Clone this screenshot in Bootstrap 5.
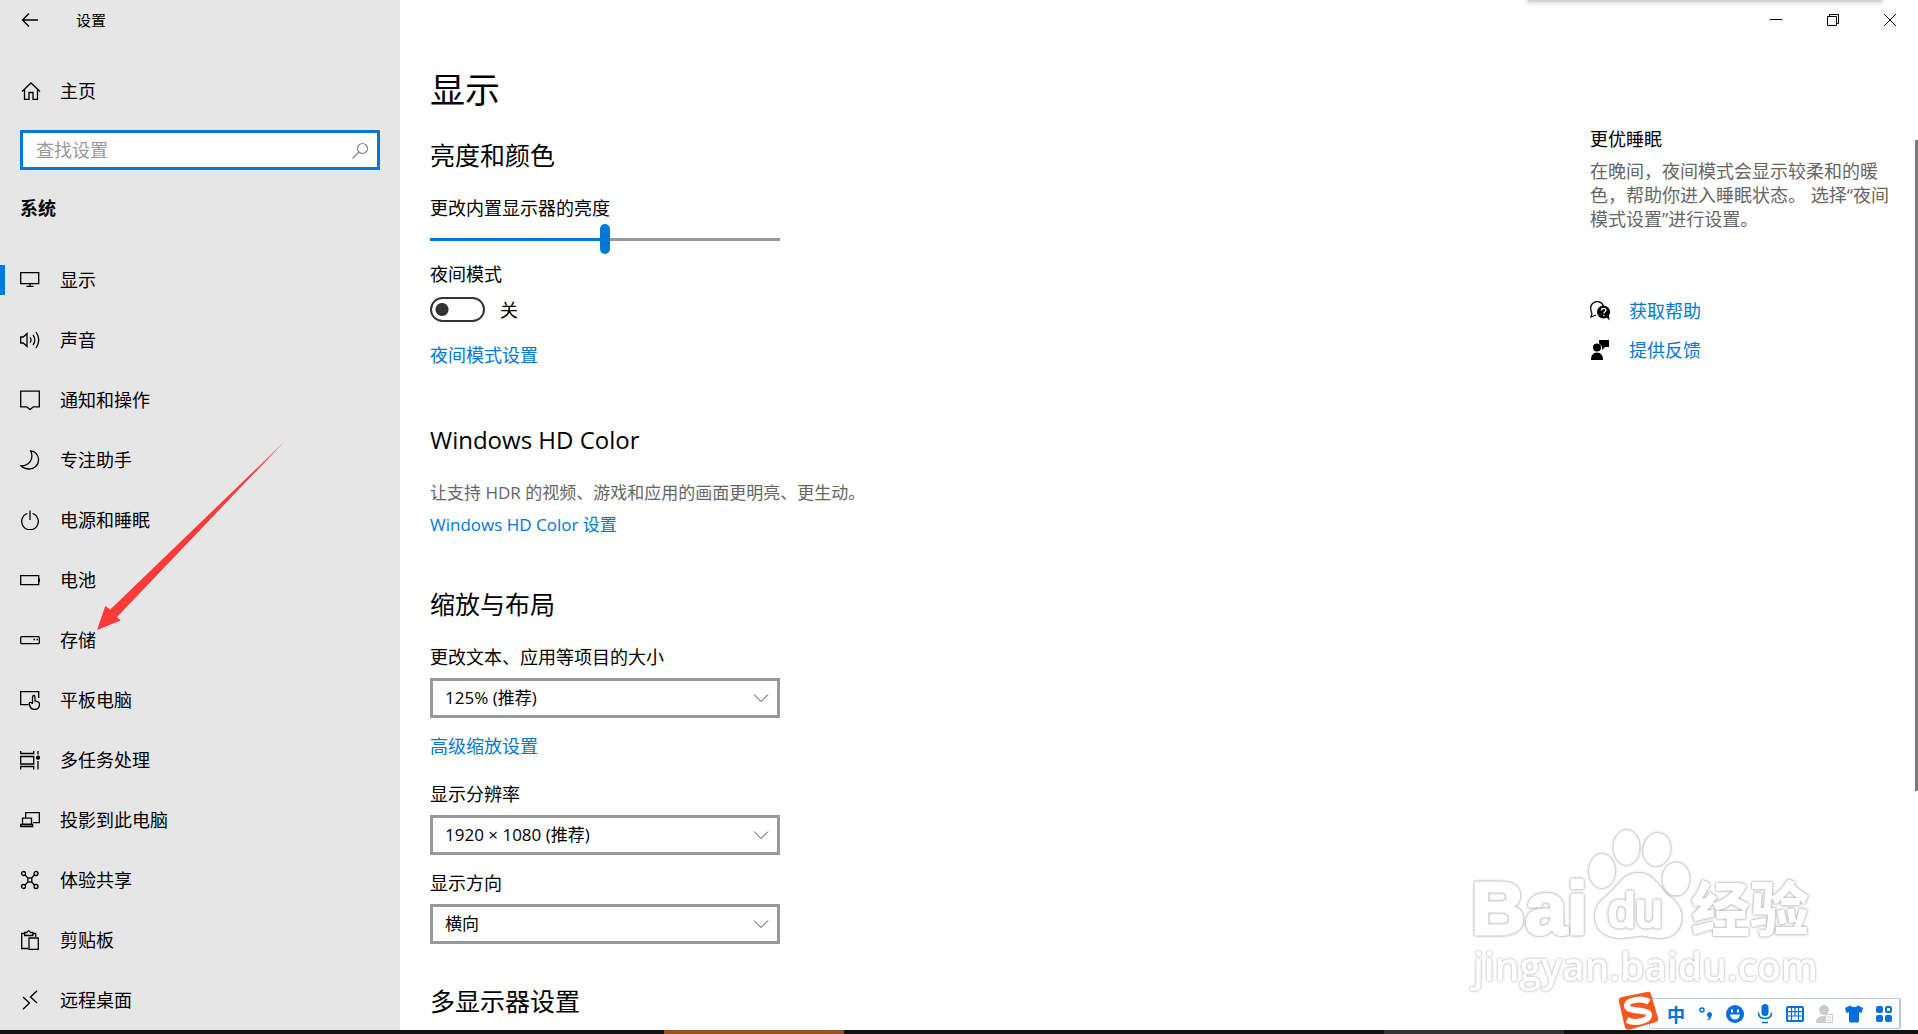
<!DOCTYPE html>
<html lang="zh-CN">
<head>
<meta charset="utf-8">
<meta name="viewport" content="width=device-width, initial-scale=1">
<title>设置</title>
<link href="https://cdn.jsdelivr.net/npm/bootstrap@5.3.0/dist/css/bootstrap.min.css" rel="stylesheet">
<style>
:root{--accent:#0078d7;--edge:#999}
body{font-family:"Open Sans","Noto Sans CJK SC",sans-serif;font-size:18px;line-height:24px;color:#000;background:#fff}
a{color:var(--accent);text-decoration:none}
svg{flex:none;display:block}
.line-art{fill:none;stroke:#000;stroke-width:1.3}
.side-pane{width:400px;background:#e6e6e6}
.title-line{height:40px;font-size:15px}
.back-btn{width:60px;height:40px}
.home-link{height:60px;margin-top:21px;gap:14px;color:#000}
.find-box{margin:9px 20px 0}
.find-box input{height:40px;border:3px solid var(--accent);border-radius:0;padding:0 40px 0 13px;font-size:18px;color:#000}
.find-box input::placeholder{color:#999;opacity:1}
.find-box svg{position:absolute;right:11px;top:12px}
.pane-title{font-size:18px;font-weight:700;line-height:24px;margin:26px 20px 30px}
.side-nav .nav-link{height:60px;padding:0 20px;gap:20px;color:#000;position:relative}
.side-nav .nav-link.active::before{content:"";position:absolute;left:0;top:15px;width:5px;height:30px;background:var(--accent)}
.win-btn{width:57px;height:40px}
.page-main{padding:26px 0 0 30px}
h1{font-size:35px;line-height:48px;margin:0;font-weight:400}
h2{font-size:25px;line-height:34px;margin:0;font-weight:400}
.h2-latin{font-size:24px}
.latin{font-size:17px}
.grp{margin-top:24px}
.grp-a{margin-top:56px}
.grp-b{margin-top:50px}
.grp-c{margin-top:40px}
.under-h{margin-top:24px}
.field{width:350px;max-width:100%}
.bright{appearance:none;-webkit-appearance:none;display:block;width:100%;height:30px;margin:4px 0 0;background:linear-gradient(var(--accent),var(--accent)) 0 14px/50% 3px no-repeat,linear-gradient(var(--edge),var(--edge)) 0 14px/100% 3px no-repeat}
.bright::-webkit-slider-thumb{-webkit-appearance:none;width:10px;height:30px;border-radius:5px;background:var(--accent)}
.bright::-moz-range-thumb{width:10px;height:30px;border:0;border-radius:5px;background:var(--accent)}
.night-row{gap:15px;padding:11px 0 21px}
.night-row .form-check-input{width:55px;height:25px;margin:0;float:none;border:2px solid #333;border-radius:13px;background:radial-gradient(circle at 10px 50%,#333 6px,transparent 7px) no-repeat}
.pick{height:40px;margin-top:9px;border:3px solid var(--edge);border-radius:0;padding:0 40px 0 12px;font-size:17px;line-height:24px;color:#000;background-image:url("data:image/svg+xml,%3Csvg xmlns='http://www.w3.org/2000/svg' viewBox='0 0 16 16'%3E%3Cpath d='M1 4.5l7 7 7-7' fill='none' stroke='%23444' stroke-width='1'/%3E%3C/svg%3E");background-size:16px 16px;background-position:right 8px center}
.tips{width:328px;padding:61px 24px 0 0}
.tips p{margin:8px 0 0}
.help-list{padding-top:60px}
.muted{color:#666}
.help-link{gap:18px;height:39px}
.thumb{position:absolute;right:0;top:140px;width:3px;height:63%;background:#7a7a7a}
.peek{position:absolute;right:36px;top:-6px;width:354px;height:8px;background:#d4d4d4;box-shadow:0 0 4px 1px #d4d4d4}
.pointer-arrow{position:absolute;left:96px;top:441px}
.brand-mark{position:absolute;right:88px;bottom:32px}
.brand-mark .puff{fill:#fff;filter:drop-shadow(0 0 1px #aaa) drop-shadow(0 0 1px #ccc)}
.brand-mark .puff-thick{stroke:#fff;stroke-width:3;stroke-linejoin:round}
.brand-mark .puff-soft{fill:#fff;filter:drop-shadow(0 0 1px #bbb) drop-shadow(0 0 1px #ddd)}
.ime{position:absolute;right:17px;bottom:5px;width:252px;height:31px;padding-left:11px;background:#fff;border:1px solid #b9c9e4;border-right-width:2px;border-radius:2px}
.ime .btn{width:30px;height:29px;color:#0070dc;font:700 18px/24px "Noto Sans CJK SC",sans-serif}
.ime-logo{position:absolute;left:-32px;top:-8px}
.task-strip{height:4px;background:#111}
.task-strip i{width:180px}
</style>
</head>
<body>
<div class="vh-100 d-flex flex-column overflow-hidden position-relative">
<div class="d-flex flex-grow-1 overflow-hidden" style="min-height:0">
  <aside class="side-pane flex-shrink-0 overflow-hidden">
    <header class="title-line d-flex align-items-center">
      <button class="btn back-btn p-0 d-flex align-items-center justify-content-center flex-shrink-0 border-0" aria-label="返回"><svg width="18" height="16" viewBox="0 0 18 16" class="line-art"><path d="M17 8H1.500M8 1.500L1.500 8 8 14.500"/></svg></button>
      <span class="ps-3">设置</span>
    </header>
    <a href="#" class="home-link d-flex align-items-center px-3"><svg width="30" height="20" viewBox="-5 0 30 20" class="line-art"><path d="M1 10.500L10 2l9 8.500M3.500 8.500V18.400H8V11.500h4v6.900h4.500V8.500"/></svg><span>主页</span></a>
    <div class="find-box position-relative">
      <input type="search" class="form-control shadow-none" placeholder="查找设置" aria-label="查找设置">
      <svg width="18" height="18" viewBox="0 0 18 18" fill="none" stroke="#888" stroke-width="1.200"><circle cx="11.500" cy="6.500" r="5"/><path d="M8 10L1.500 16.500"/></svg>
    </div>
    <h2 class="pane-title">系统</h2>
    <nav class="nav flex-column side-nav flex-nowrap">
      <a href="#" class="nav-link active d-flex align-items-center" aria-current="page"><svg width="20" height="20" viewBox="0 0 20 20" class="line-art"><path d="M.7 2.700h18v11H.7zM10 13.700v2.500M6.500 16.300h7"/></svg>显示</a>
      <a href="#" class="nav-link d-flex align-items-center"><svg width="20" height="20" viewBox="0 0 20 20" class="line-art"><path d="M.7 7v6h2.600L7 16.500v-13L3.300 7zM10 7.300q2 2.700 0 5.400M13 5q3.600 5 0 10M16 2q5.500 8 0 16"/></svg>声音</a>
      <a href="#" class="nav-link d-flex align-items-center"><svg width="20" height="20" viewBox="0 0 20 20" class="line-art"><path d="M.7 1.200h18.600v15.600h-6L10 19.600l-3.300-2.800h-6z"/></svg>通知和操作</a>
      <a href="#" class="nav-link d-flex align-items-center"><svg width="20" height="20" viewBox="0 0 20 20" class="line-art"><path d="M10.700.8C15 1 18.600 5 18.600 9.800c0 5-4 9.200-9.200 9.200-3.700 0-6.700-1.300-8.400-3.200C8.500 16 14.500 9.500 10.700.8z"/></svg>专注助手</a>
      <a href="#" class="nav-link d-flex align-items-center"><svg width="20" height="20" viewBox="0 0 20 20" class="line-art"><path d="M7.500 3.500a8.300 8.300 0 1 0 5 0M10 .5v9.500"/></svg>电源和睡眠</a>
      <a href="#" class="nav-link d-flex align-items-center"><svg width="20" height="20" viewBox="0 0 20 20" class="line-art"><path d="M.7 5.700h18v9H.7zM19.500 8.500v3.500"/></svg>电池</a>
      <a href="#" class="nav-link d-flex align-items-center"><svg width="20" height="20" viewBox="0 0 20 20" class="line-art"><rect x=".7" y="6.700" width="18.600" height="7" rx="1"/><path d="M13.500 9.500h1.500M16.500 9.500H18"/></svg>存储</a>
      <a href="#" class="nav-link d-flex align-items-center"><svg width="20" height="20" viewBox="0 0 20 20" class="line-art"><path d="M8.500 14.700H.7v-13h18V8M12.500 14V7c0-2 2.500-2 2.500 0v4l3 .8q1.500.6 1.500 2.200c0 3-1.500 5.500-5 5.500-3 0-4.500-2-5.200-5.500-.3-2 1.500-2.500 3.200 0"/></svg>平板电脑</a>
      <a href="#" class="nav-link d-flex align-items-center"><svg width="20" height="20" viewBox="0 0 20 20" class="line-art"><path d="M.7 1v2.500h13V1M.7 6.500h13v7.500h-13zM.7 19.500v-3h13v3M18 1v3.500M18 11v8.500"/><circle cx="18" cy="7.700" r="1.500" fill="#000"/></svg>多任务处理</a>
      <a href="#" class="nav-link d-flex align-items-center"><svg width="20" height="20" viewBox="0 0 20 20" class="line-art"><path d="M5.700 8V2.700h13.600v10H13M2.500 8.200h9v6h-9zM.7 16.500V14.500h12v2z"/></svg>投影到此电脑</a>
      <a href="#" class="nav-link d-flex align-items-center"><svg width="20" height="20" viewBox="0 0 20 20" class="line-art"><circle cx="3.500" cy="3.500" r="2"/><circle cx="16" cy="3.500" r="2"/><circle cx="3.500" cy="16.500" r="2"/><circle cx="16" cy="16.500" r="2"/><rect x="7.800" y="8" width="4" height="4"/><path d="M5 5l3 3M14.500 5l-3 3M5 15l3-3M14.500 15l-3-3"/></svg>体验共享</a>
      <a href="#" class="nav-link d-flex align-items-center"><svg width="20" height="20" viewBox="0 0 20 20" class="line-art"><path d="M8 18.500H1.700v-15H4M13 3.500h2.700V7M4.700 5.500v-3h2.200q1.800-3.300 3.600 0h2.300v3zM9 8h9.300v11.300H9z"/></svg>剪贴板</a>
      <a href="#" class="nav-link d-flex align-items-center"><svg width="20" height="20" viewBox="0 0 20 20" class="line-art"><path d="M3 7l6.500 6L3 19.300M17 .7L10.500 7 17 13"/></svg>远程桌面</a>
    </nav>
  </aside>
  <div class="flex-grow-1 d-flex flex-column overflow-hidden">
    <div class="d-flex justify-content-end flex-shrink-0">
      <button class="btn win-btn p-0 border-0 d-flex align-items-center justify-content-center" aria-label="最小化"><svg width="12" height="12"><path d="M0 5.500h12" stroke="#000"/></svg></button>
      <button class="btn win-btn p-0 border-0 d-flex align-items-center justify-content-center" aria-label="还原"><svg width="12" height="12" fill="none" stroke="#000"><path d="M.5 2.500h9v9h-9zM2.500 2.500v-2h9v9h-2"/></svg></button>
      <button class="btn win-btn p-0 border-0 d-flex align-items-center justify-content-center" aria-label="关闭"><svg width="12" height="12" stroke="#000"><path d="M0 0l12 12M12 0L0 12"/></svg></button>
    </div>
    <main class="page-main d-flex">
      <div class="flex-grow-1">
        <h1>显示</h1>
        <section class="grp">
          <h2>亮度和颜色</h2>
          <div class="field under-h"><label for="bright" class="d-block">更改内置显示器的亮度</label>
          <input type="range" class="bright" id="bright" min="0" max="100" value="50"></div>
          <div class="pt-2"><label for="night" class="d-block">夜间模式</label></div>
          <div class="form-switch m-0 d-flex align-items-center night-row"><input class="form-check-input shadow-none" type="checkbox" role="switch" id="night"><span>关</span></div>
          <a href="#" class="d-block">夜间模式设置</a>
        </section>
        <section class="grp-a">
          <h2 class="h2-latin">Windows HD Color</h2>
          <div class="under-h muted latin">让支持 HDR 的视频、游戏和应用的画面更明亮、更生动。</div>
          <a href="#" class="d-inline-block mt-2 latin">Windows HD Color 设置</a>
        </section>
        <section class="grp-b">
          <h2>缩放与布局</h2>
          <div class="field under-h"><label for="scale" class="d-block">更改文本、应用等项目的大小</label>
          <select id="scale" class="form-select pick shadow-none"><option>125% (推荐)</option></select></div>
          <a href="#" class="d-inline-block mt-3">高级缩放设置</a>
          <div class="field grp"><label for="res" class="d-block">显示分辨率</label>
          <select id="res" class="form-select pick shadow-none"><option>1920 × 1080 (推荐)</option></select></div>
          <div class="field mt-3"><label for="dir" class="d-block">显示方向</label>
          <select id="dir" class="form-select pick shadow-none"><option>横向</option></select></div>
        </section>
        <section class="grp-c"><h2>多显示器设置</h2></section>
      </div>
      <aside class="tips flex-shrink-0">
        <div>更优睡眠</div>
        <p class="muted">在晚间，夜间模式会显示较柔和的暖色，帮助你进入睡眠状态。 选择“夜间模式设置”进行设置。</p>
        <div class="help-list">
          <a href="#" class="help-link d-flex align-items-center"><svg width="21" height="20" viewBox="0 0 21 20"><path d="M2 12.500Q.7 10 .7 7.500A6.500 6.500 0 0 1 13.500 5.500M2 12.500L1 16l5-2" fill="none" stroke="#000" stroke-width="1.300"/><circle cx="13.500" cy="11" r="6.500"/><path d="M16 16l3.500 3.500-.5-6z"/><path d="M11.500 9.500q0-2.200 2.200-2.200 2.200 0 2.200 1.900 0 1-1.200 1.800-.9.600-.9 1.500M13.800 13.800v1.400" fill="none" stroke="#fff" stroke-width="1.300"/></svg>获取帮助</a>
          <a href="#" class="help-link d-flex align-items-center"><svg width="21" height="20" viewBox="0 0 21 20"><circle cx="7" cy="7.500" r="4"/><path d="M1 20q0-7.500 6-7.500T13 20zM9 0h10v7h-4l-3 3V6.500L9 3z"/></svg>提供反馈</a>
        </div>
      </aside>
    </main>
  </div>
</div>
<footer class="task-strip flex-shrink-0 d-flex justify-content-end">
  <i style="background:#9c4f16"></i><i></i><i></i><i></i><i style="background:#333"></i><i></i><i style="width:174px"></i>
</footer>
<div class="peek"></div>
<div class="thumb"></div>
<svg class="pointer-arrow" width="190" height="190" fill="#fc3a3a" aria-hidden="true"><path d="M1 189L9.300 165l5 3.500L188 1 21 176l3.700 3.500z"/></svg>
<svg class="brand-mark" width="364" height="178" viewBox="1466 824 364 178" aria-hidden="true">
  <g class="puff"><ellipse cx="1602" cy="871" rx="13" ry="17"/><ellipse cx="1626.500" cy="847.500" rx="13" ry="17.500"/><ellipse cx="1657" cy="849.500" rx="13.500" ry="16.500" transform="rotate(10 1657 849)"/><ellipse cx="1676" cy="879" rx="13.500" ry="16.500"/>
  <path d="M1638 873c16 0 20 14 32 24 12 9 14 21 9 31-7 12-21 11-34 8-8-1-13 2-24 2-16 0-26-9-26-21 0-14 9-18 18-27 9-10 13-17 25-17z"/></g>
  <text class="puff puff-thick" x="1471" y="934" font-family="Liberation Sans,sans-serif" font-weight="700" font-size="75">Bai</text>
  <text class="puff puff-thick" x="1608" y="927" font-family="Liberation Sans,sans-serif" font-weight="400" font-size="49">du</text>
  <text class="puff" x="1691" y="931" font-family="Noto Sans CJK SC,sans-serif" font-weight="900" font-size="59">经验</text>
  <text class="puff-soft" x="1473" y="981" font-family="Open Sans,sans-serif" font-size="39" font-weight="600">jingyan.baidu.com</text>
</svg>
<div class="ime d-flex align-items-center" role="toolbar" aria-label="输入法">
  <svg class="ime-logo" width="42" height="40" viewBox="0 0 42 40"><path d="M4 6L29 1q3-1 4 2l7 24q1 3-2 4L12 38.500q-4 1-5-2L1 11q-1-4 3-5z" fill="#f4581f"/><path d="M31 11C25 7 9 8 9 15c0 6 22 3 22 9s-14 9-22 5" fill="none" stroke="#fff" stroke-width="6"/></svg>
  <button class="btn p-0 border-0">中</button>
  <button class="btn p-0 border-0 d-flex align-items-center justify-content-center" aria-label="标点"><svg width="16" height="16"><circle cx="4" cy="4" r="2" fill="none" stroke="#0070dc" stroke-width="1.500"/><path d="M9 8.500a2.500 2.500 0 1 1 4.500 1.500q-.5 3-3.500 4.500l-.5-1q1.300-1 1.500-2.200Q9 11 9 8.500z" fill="#0070dc"/></svg></button>
  <button class="btn p-0 border-0 d-flex align-items-center justify-content-center" aria-label="表情"><svg width="18" height="18"><circle cx="9" cy="9" r="9" fill="#0070dc"/><path d="M6 4.500v3M12 4.500v3" stroke="#fff" stroke-width="2"/><path d="M4 9.500h10q-1 5-5 5t-5-5z" fill="#fff"/></svg></button>
  <button class="btn p-0 border-0 d-flex align-items-center justify-content-center" aria-label="语音"><svg width="16" height="20"><rect x="4.500" y="0" width="7" height="12" rx="3.500" fill="#0070dc"/><path d="M1.500 8.500q0 6 6.500 6t6.500-6M5 18.500h6" fill="none" stroke="#0070dc" stroke-width="1.600"/></svg></button>
  <button class="btn p-0 border-0 d-flex align-items-center justify-content-center" aria-label="软键盘"><svg width="18" height="16"><rect x="1" y="1" width="16" height="14" rx="1" fill="#fff" stroke="#0070dc" stroke-width="2"/><path d="M2 5.700h14M2 10h14M5.500 2v12M9 2v8M12.500 2v12" stroke="#0070dc" stroke-width="1.200"/></svg></button>
  <button class="btn p-0 border-0 d-flex align-items-center justify-content-center" aria-label="账户"><svg width="18" height="18" fill="#ccc"><circle cx="8" cy="5" r="5"/><path d="M0 18q0-7 7-7h2v7z"/><path d="M9.500 9.500h7v8h-7z" fill="#fff" stroke="#ccc"/><path d="M11 12h4M11 15h4" stroke="#ccc"/></svg></button>
  <button class="btn p-0 border-0 d-flex align-items-center justify-content-center" aria-label="皮肤"><svg width="18" height="18" fill="#0070dc"><path d="M5 .5q4 3.500 8 0l5 2.500-1.500 5-2.500-.7V16q0 1.500-1.500 1.500h-7Q4 17.500 4 16V7.300L1.500 8 0 3z"/></svg></button>
  <button class="btn p-0 border-0 d-flex align-items-center justify-content-center" aria-label="工具箱"><svg width="16" height="16" fill="#0070dc"><rect width="7" height="7" rx="2"/><rect y="9" width="7" height="7" rx="2"/><rect x="9" y="9" width="7" height="7" rx="2"/><rect x="10" y="1" width="5" height="5" rx="1.500" fill="none" stroke="#0070dc" stroke-width="2"/></svg></button>
</div>
</div>
<script src="https://cdn.jsdelivr.net/npm/bootstrap@5.3.0/dist/js/bootstrap.bundle.min.js"></script>
</body>
</html>
